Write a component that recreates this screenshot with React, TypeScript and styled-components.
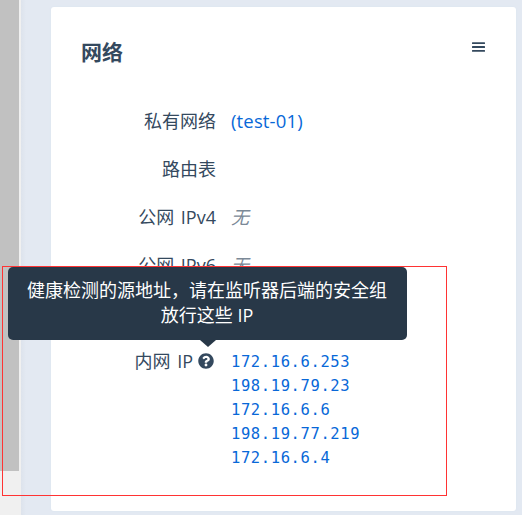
import React from "react";
import styled, { createGlobalStyle } from "styled-components";

const GlobalStyle = createGlobalStyle`
  * { box-sizing: border-box; }
  body {
    margin: 0;
    overflow: hidden;
    font-family: "Open Sans", "Noto Sans CJK SC", sans-serif;
    font-size: 18px;
    font-weight: 400;
    line-height: 24px;
    color: #34495e;
  }
`;

const Page = styled.div`
  position: relative;
  display: flex;
  width: 522px;
  height: 515px;
  overflow: hidden;
  background: #e3e9f1;
`;

const ScrollTrack = styled.div`
  flex: none;
  width: 21px;
  background: #f0f0f0;
`;

const ScrollThumb = styled.div`
  width: 19px;
  height: 471px;
  background: #c1c1c1;
`;

const Content = styled.main`
  flex: 1;
  padding: 7px 6px 4px 30px;
  background: linear-gradient(90deg, #dde3ec 0, #e3e9f2 5px, #e3e9f2 100%);
`;

const Card = styled.section`
  height: 504px;
  padding: 30px 30px 0;
  border-radius: 3px;
  background: #fff;
  box-shadow: 0 0 2px #d8e3ee;
`;

const CardHeader = styled.header`
  display: flex;
  justify-content: space-between;
  height: 72px;
`;

const Title = styled.h2`
  margin: 0;
  font-size: 21px;
  line-height: 31px;
  font-weight: 700;
`;

const MenuButton = styled.button`
  display: flex;
  width: 15px;
  height: 20px;
  padding: 0;
  border: 0;
  align-items: center;
  justify-content: center;
  background: none;
  color: #34495e;
`;

const Details = styled.dl`
  display: grid;
  grid-template-columns: 135px 1fr;
  column-gap: 15px;
  row-gap: 24px;
  grid-auto-rows: minmax(24px, auto);
  margin: 0;
`;

const Label = styled.dt`
  display: flex;
  height: 24px;
  justify-content: flex-end;
  align-items: center;
  white-space: pre;
  word-spacing: 2px;
`;

const Value = styled.dd<{ $mono?: boolean }>`
  display: flex;
  flex-direction: column;
  align-items: flex-start;
  margin: 0;
  ${(p) => p.$mono && `padding-top: 1px; font-family: "DejaVu Sans Mono", monospace; font-size: 15.5px; letter-spacing: 0.6px;`}
`;

const Link = styled.a<{ $wide?: boolean }>`
  color: #0868d8;
  text-decoration: none;
  ${(p) => p.$wide && `font-size: 18.5px; letter-spacing: 0.15px;`}
`;

const Empty = styled.em`
  color: #7b8997;
`;

const HelpMark = styled.span`
  position: relative;
  display: flex;
  width: 16px;
  height: 16px;
  margin: 0 2px 0 5px;
  word-spacing: 0;
`;

const Tooltip = styled.div`
  position: absolute;
  left: 50%;
  bottom: 29px;
  width: 399px;
  height: 73px;
  margin-left: -198px;
  padding: 11px 19px 11px 18px;
  border-radius: 5px;
  background: #283848;
  color: #fff;
  line-height: 25px;
  text-align: center;
  white-space: normal;

  &::after {
    content: "";
    position: absolute;
    top: 100%;
    left: 50%;
    margin-left: -8px;
    border: 8px solid transparent;
    border-top: 7px solid #283848;
    border-bottom: 0;
  }
`;

const Highlight = styled.div`
  position: absolute;
  left: 2px;
  top: 266px;
  width: 445px;
  height: 230px;
  border: 1px solid #ff3333;
`;

const addresses = ["172.16.6.253", "198.19.79.23", "172.16.6.6", "198.19.77.219", "172.16.6.4"];

export default function App() {
  return (
    <Page>
      <GlobalStyle />
      <ScrollTrack>
        <ScrollThumb />
      </ScrollTrack>
      <Content>
        <Card>
          <CardHeader>
            <Title>网络</Title>
            <MenuButton aria-label="menu">
              <svg width="13" height="10" viewBox="0 0 13 10" fill="currentColor">
                <rect y="0.2" width="13" height="1.8" rx="0.5" />
                <rect y="4.1" width="13" height="1.8" rx="0.5" />
                <rect y="8" width="13" height="1.8" rx="0.5" />
              </svg>
            </MenuButton>
          </CardHeader>
          <Details>
            <Label>私有网络</Label>
            <Value><Link $wide>(test-01)</Link></Value>
            <Label>路由表</Label>
            <Value />
            <Label>公网 IPv4</Label>
            <Value><Empty>无</Empty></Value>
            <Label>公网 IPv6</Label>
            <Value><Empty>无</Empty></Value>
            <Label />
            <Value />
            <Label>
              内网 IP
              <HelpMark>
                <svg width="16" height="16" viewBox="0 0 512 512" fill="currentColor">
                  <path d="M504 256c0 137-111 248-248 248S8 393 8 256 119 8 256 8s248 111 248 248zM262.700 90c-54.500 0-89.300 23-116.500 63.800-3.500 5.300-2.400 12.400 2.700 16.300l34.700 26.300c5.200 3.900 12.600 3 16.700-2.100 17.900-22.700 30.100-35.800 57.300-35.800 20.400 0 45.700 13.100 45.700 33 0 15-12.400 22.700-32.500 34C247.100 238.500 216 254.900 216 296v4c0 6.600 5.400 12 12 12h56c6.600 0 12-5.400 12-12v-1.300c0-28.500 83.200-29.600 83.200-106.700 0-58-60.200-102-116.500-102zM256 338c-25.400 0-46 20.600-46 46s20.600 46 46 46 46-20.600 46-46-20.600-46-46-46z" />
                </svg>
                <Tooltip role="tooltip">健康检测的源地址，请在监听器后端的安全组放行这些 IP</Tooltip>
              </HelpMark>
            </Label>
            <Value $mono>
              {addresses.map((ip) => <Link key={ip}>{ip}</Link>)}
            </Value>
          </Details>
        </Card>
      </Content>
      <Highlight />
    </Page>
  );
}
